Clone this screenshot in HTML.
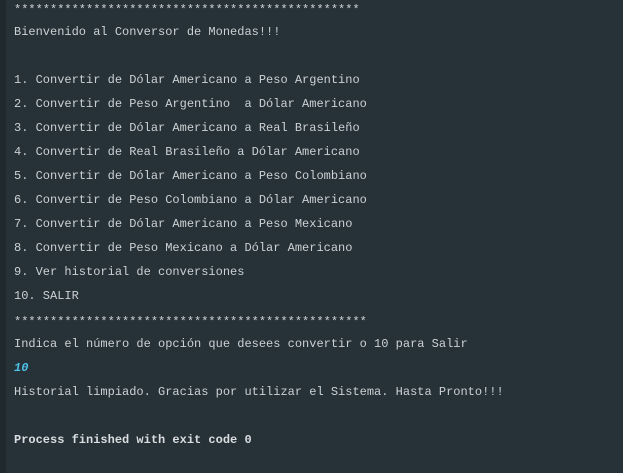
<!DOCTYPE html>
<html><head><style>
html,body{margin:0;padding:0;}
body{width:623px;height:473px;background:#263238;overflow:hidden;position:relative;}
.strip{position:absolute;left:0;top:0;width:6px;height:473px;background:#20292e;}
pre{position:absolute;left:14px;top:-4px;margin:0;font-family:"Liberation Mono",monospace;font-size:12px;line-height:24px;color:#cdd1d5;}
.star{position:relative;top:2px;}
.in{color:#4fc1e9;font-style:italic;font-weight:bold;}
b{font-weight:bold;color:#dadde1;}
</style></head><body><div class="strip"></div>
<pre><span class="star">************************************************</span>
Bienvenido al Conversor de Monedas!!!

1. Convertir de Dólar Americano a Peso Argentino
2. Convertir de Peso Argentino  a Dólar Americano
3. Convertir de Dólar Americano a Real Brasileño
4. Convertir de Real Brasileño a Dólar Americano
5. Convertir de Dólar Americano a Peso Colombiano
6. Convertir de Peso Colombiano a Dólar Americano
7. Convertir de Dólar Americano a Peso Mexicano
8. Convertir de Peso Mexicano a Dólar Americano
9. Ver historial de conversiones
10. SALIR
<span class="star">*************************************************</span>
Indica el número de opción que desees convertir o 10 para Salir
<span class="in">10</span>
Historial limpiado. Gracias por utilizar el Sistema. Hasta Pronto!!!

<b>Process finished with exit code 0</b>
</pre></body></html>
